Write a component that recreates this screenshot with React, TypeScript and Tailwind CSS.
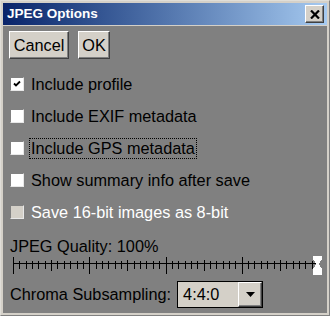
import React from "react";

const ROWS = [
  { label: "Include profile", checked: true },
  { label: "Include EXIF metadata" },
  { label: "Include GPS metadata", focused: true },
  { label: "Show summary info after save" },
  { label: "Save 16-bit images as 8-bit", disabled: true },
];

function Bevel({ className = "", children }: { className?: string; children?: React.ReactNode }) {
  return (
    <div
      className={`bg-[#d4d0c8] border border-t-white border-l-white border-r-[#404040] border-b-[#404040] shadow-[inset_-1px_-1px_0_#808080] ${className}`}
    >
      {children}
    </div>
  );
}

function CheckBox({ checked, disabled }: { checked?: boolean; disabled?: boolean }) {
  return (
    <div
      className={`w-[14px] h-[14px] shrink-0 flex items-center justify-center border border-t-[#808080] border-l-[#808080] border-r-[#e8e8e8] border-b-[#e8e8e8] ${
        disabled ? "bg-[#d4d0c8]" : "bg-white"
      }`}
    >
      {checked && (
        <svg width="8" height="8" viewBox="0 0 8 8">
          <path d="M1 3.5 L3 5.5 L7 1.5" stroke="#000" strokeWidth="1.8" fill="none" />
        </svg>
      )}
    </div>
  );
}

// slider track: svg starts at page x=3, so page coords minus 3
function Slider() {
  const x0 = 10;
  const x1 = 315;
  const n = 48;
  const step = (x1 - x0) / n;
  const ticks = Array.from({ length: n + 1 }, (_, i) => {
    const x = Math.round(x0 + i * step) + 0.5;
    const long = i % 12 === 0;
    const mid = i % 6 === 0;
    return (
      <line
        key={i}
        x1={x}
        x2={x}
        y1={long ? 2 : mid ? 5 : 6}
        y2={long ? 19 : mid ? 16 : 14}
        stroke="#000"
        strokeWidth="1"
      />
    );
  });
  return (
    <svg width="324" height="22" className="block -ml-[6px] shrink-0" shapeRendering="crispEdges">
      <line x1={x0} x2={x1} y1={8.5} y2={8.5} stroke="#000" strokeWidth="1" />
      {ticks}
      <path d="M310 1 H319 V4 L315.5 9 L319 14 V20 H310 V14 L313.5 9 L310 4 Z" fill="#fff" />
    </svg>
  );
}

export default function App() {
  return (
    <div
      className="w-[330px] h-[316px] bg-[#d4d0c8] border border-t-[#e0ded8] border-l-[#e0ded8] border-r-[#808080] border-b-[#808080] p-[2px] flex flex-col"
      style={{ fontFamily: '"Liberation Sans", Arial, sans-serif' }}
    >
      <div className="h-[22px] shrink-0 flex items-center justify-between pl-[4px] pr-[3px] bg-gradient-to-r from-[#0a246a] to-[#a6caf0]">
        <span className="text-white font-bold text-[13.5px] leading-none">JPEG Options</span>
        <Bevel className="w-[19px] h-[18px] flex items-center justify-center">
          <svg width="10" height="9" viewBox="0 0 10 9">
            <path d="M1 0.5 L9 8.5 M9 0.5 L1 8.5" stroke="#000" strokeWidth="2.2" />
          </svg>
        </Bevel>
      </div>
      <div className="h-[1px] shrink-0 bg-[#d4d0c8]" />
      <div className="flex-1 bg-[#808080] px-[6px] flex flex-col text-[16.3px] text-black">
        <div className="flex gap-[9px] mt-[5px]">
          <Bevel className="w-[60px] h-[28px] flex items-center justify-center leading-none">Cancel</Bevel>
          <Bevel className="w-[32px] h-[28px] flex items-center justify-center leading-none">OK</Bevel>
        </div>
        <div className="flex flex-col mt-[9px]">
          {ROWS.map((r) => (
            <div key={r.label} className="h-[32px] flex items-center pl-[1px]">
              <CheckBox checked={r.checked} disabled={r.disabled} />
              <span
                className={`ml-[5px] px-[1px] leading-[19px] border border-dotted ${
                  r.focused ? "border-black" : "border-transparent"
                } ${r.disabled ? "text-white" : ""}`}
              >
                {r.label}
              </span>
            </div>
          ))}
        </div>
        <div className="mt-[9px] pl-[1px] leading-[18px]">JPEG Quality: 100%</div>
        <Slider />
        <div className="flex items-center gap-[6px] mt-[4px] pl-[1px]">
          <span>Chroma Subsampling:</span>
          <div className="w-[86px] h-[27px] border border-black bg-[#d4d0c8] flex">
            <span className="flex-1 pl-[5px] flex items-center">4:4:0</span>
            <Bevel className="w-[24px] h-full flex items-center justify-center">
              <svg width="9" height="5" viewBox="0 0 9 5">
                <path d="M0 0 H9 L4.5 5 Z" fill="#000" />
              </svg>
            </Bevel>
          </div>
        </div>
      </div>
    </div>
  );
}
